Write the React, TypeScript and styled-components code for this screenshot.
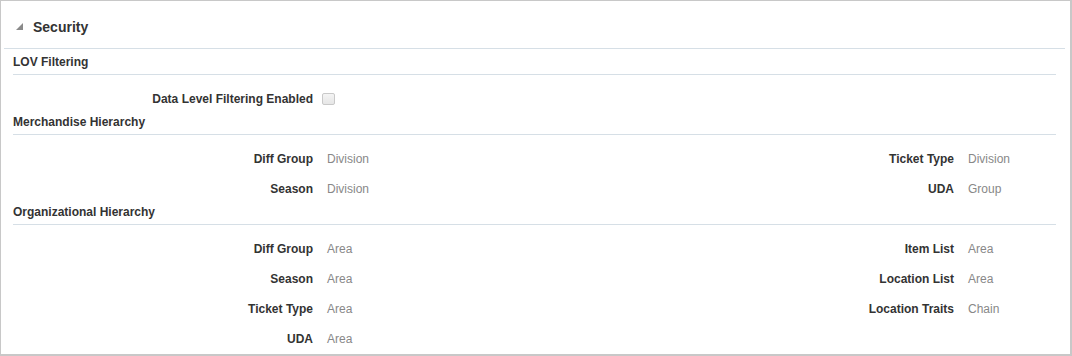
import React from "react";
import styled, { createGlobalStyle } from "styled-components";

const Global = createGlobalStyle`
  html, body { margin: 0; padding: 0; background: #fff; }
  body { font-family: "Liberation Sans", Arial, sans-serif; color: #333; }
`;

const Panel = styled.div`
  box-sizing: border-box;
  width: 1072px;
  height: 356px;
  border: 1px solid #c8c8c8;
  border-right-width: 2px;
  border-bottom-width: 2px;
  background: #fff;
  overflow: hidden;
`;

const Header = styled.div`
  box-sizing: border-box;
  display: flex;
  align-items: center;
  gap: 9px;
  height: 48px;
  margin: 0 5px 0 3px;
  padding: 4px 0 0 12px;
  border-bottom: 1px solid #d6dfe6;
`;

const Title = styled.h2`
  margin: 0;
  font-size: 14px;
  font-weight: bold;
  color: #333;
  line-height: 16px;
`;

const Body = styled.div`
  padding: 4px 14px 0 12px;
  display: flex;
  flex-direction: column;
`;

const SubHeader = styled.div`
  font-size: 12px;
  font-weight: bold;
  line-height: 16px;
  color: #333;
  padding-top: 1px;
  padding-bottom: 4px;
  border-bottom: 1px solid #d6dfe6;
`;

const Grid = styled.div`
  display: grid;
  grid-template-columns: 300px 1fr 300px 88px;
  column-gap: 14px;
  grid-auto-rows: 30px;
  padding-top: 8px;
`;

const CheckRow = styled.div`
  display: grid;
  grid-template-columns: 300px auto;
  column-gap: 9px;
  align-items: center;
  height: 30px;
  padding-top: 8px;
  box-sizing: content-box;
`;

const Label = styled.div<{ $col?: number }>`
  grid-column: ${(p) => (p.$col === 2 ? 3 : 1)};
  text-align: right;
  font-size: 12px;
  font-weight: bold;
  color: #333;
  line-height: 28px;
  padding-top: 2px;
  white-space: nowrap;
`;

const Value = styled.div<{ $col?: number }>`
  grid-column: ${(p) => (p.$col === 2 ? 4 : 2)};
  font-size: 12px;
  color: #888;
  line-height: 28px;
  padding-top: 2px;
  white-space: nowrap;
`;

const Check = styled.span`
  display: inline-block;
  width: 11px;
  height: 10px;
  margin-top: 2px;
  border: 1px solid #c9c9c9;
  border-radius: 2px;
  background: linear-gradient(#f4f4f4, #e6e6e6);
`;

type Pair = [string, string];

const Fields = ({ left, right }: { left: Pair[]; right: Pair[] }) => {
  const rows = Math.max(left.length, right.length);
  const cells: React.ReactNode[] = [];
  for (let i = 0; i < rows; i++) {
    const l = left[i];
    const r = right[i];
    if (l) {
      cells.push(
        <Label key={`ll${i}`} style={{ gridRow: i + 1 }}>{l[0]}</Label>,
        <Value key={`lv${i}`} style={{ gridRow: i + 1 }}>{l[1]}</Value>
      );
    }
    if (r) {
      cells.push(
        <Label key={`rl${i}`} $col={2} style={{ gridRow: i + 1 }}>{r[0]}</Label>,
        <Value key={`rv${i}`} $col={2} style={{ gridRow: i + 1 }}>{r[1]}</Value>
      );
    }
  }
  return <Grid>{cells}</Grid>;
};

export default function App() {
  return (
    <>
      <Global />
      <Panel>
        <Header>
          <svg width="8" height="8" viewBox="0 0 8 8">
            <polygon points="7,0 7,7 0,7" fill="#8a8a8a" />
          </svg>
          <Title>Security</Title>
        </Header>
        <Body>
          <SubHeader>LOV Filtering</SubHeader>
          <CheckRow>
            <Label>Data Level Filtering Enabled</Label>
            <Check />
          </CheckRow>
          <SubHeader>Merchandise Hierarchy</SubHeader>
          <Fields
            left={[
              ["Diff Group", "Division"],
              ["Season", "Division"],
            ]}
            right={[
              ["Ticket Type", "Division"],
              ["UDA", "Group"],
            ]}
          />
          <SubHeader>Organizational Hierarchy</SubHeader>
          <Fields
            left={[
              ["Diff Group", "Area"],
              ["Season", "Area"],
              ["Ticket Type", "Area"],
              ["UDA", "Area"],
            ]}
            right={[
              ["Item List", "Area"],
              ["Location List", "Area"],
              ["Location Traits", "Chain"],
            ]}
          />
        </Body>
      </Panel>
    </>
  );
}
